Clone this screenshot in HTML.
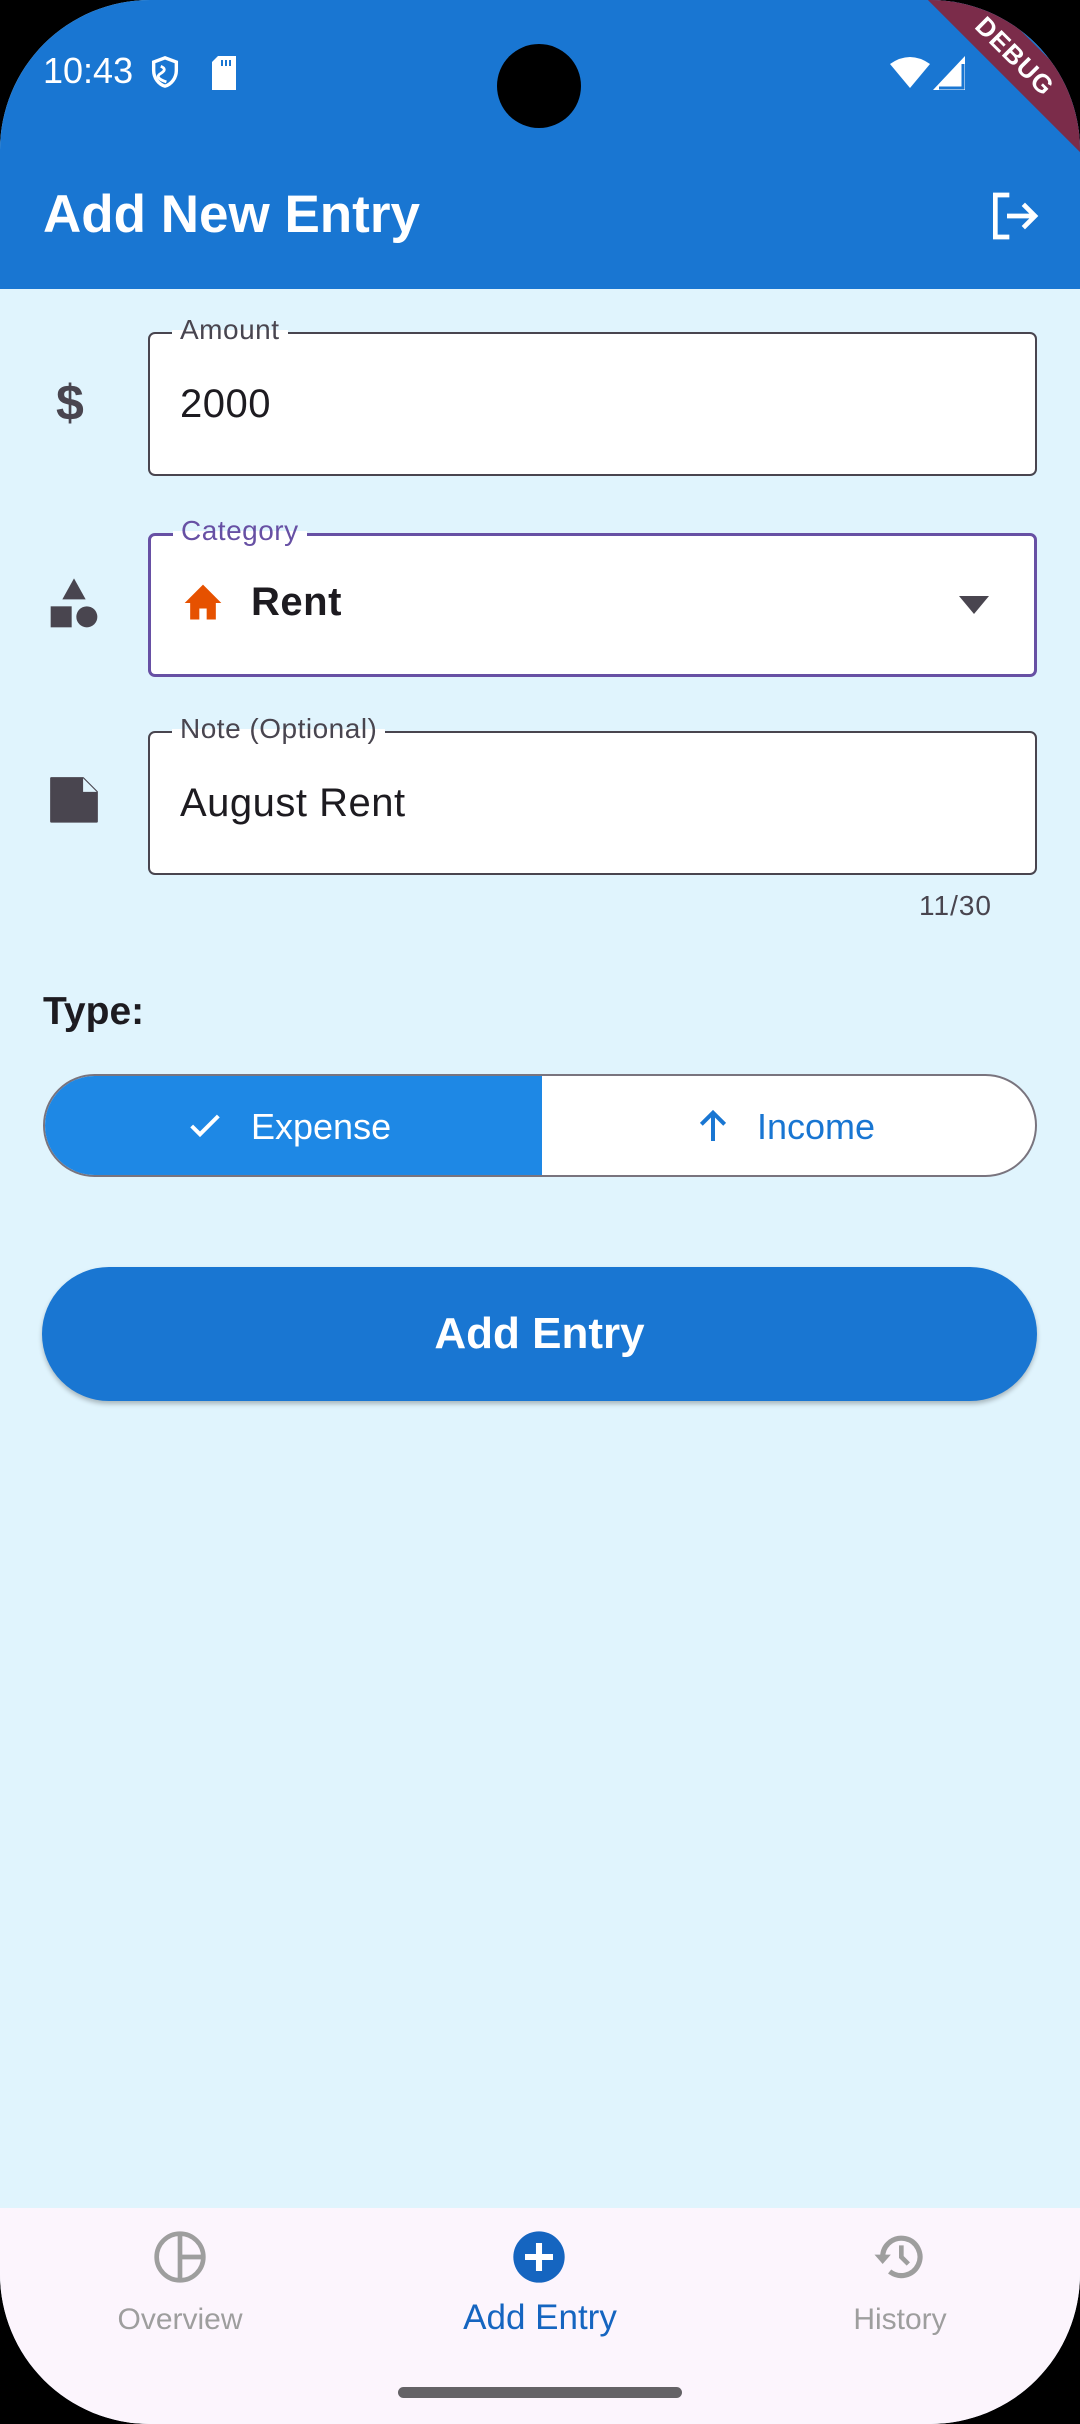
<!DOCTYPE html>
<html><head><meta charset="utf-8"><style>
*{margin:0;padding:0;box-sizing:border-box}
html,body{width:1080px;height:2424px;background:#000;overflow:hidden;font-family:"Liberation Sans",sans-serif}
#s{position:absolute;left:0;top:0;width:1080px;height:2424px;background:#E0F4FD;border-radius:150px;overflow:hidden}
.a{position:absolute}
.bar{left:0;top:0;width:1080px;height:289px;background:#1976D2}
.f{position:absolute;left:148px;width:889px;height:144px;background:#fff;border:2.5px solid #49454F;border-radius:7px}
.lbl{position:absolute;left:22px;top:-20px;background:linear-gradient(#E0F4FD 50%,#fff 50%);padding:0 8px;font-size:28px;color:#49454F;letter-spacing:.5px}
.val{position:absolute;left:30px;top:48px;font-size:40px;color:#1D1B20;letter-spacing:.5px}
</style></head><body><div id="s">
<div class="a bar"></div>
<div class="a" style="left:43px;top:50px;font-size:36px;color:#fff">10:43</div>
<svg class="a" style="left:148px;top:54px" width="34" height="36" viewBox="0 0 24 24"><path d="M12 2L4 5v6c0 5 3.4 9.7 8 11 4.6-1.3 8-6 8-11V5z" fill="none" stroke="#fff" stroke-width="2.4"/><path d="M9 8q5 2 0 5t4 6" stroke="#fff" stroke-width="2" fill="none"/></svg>
<svg class="a" style="left:210px;top:56px" width="28" height="34" viewBox="0 0 14 17"><path d="M4 0h9v17H1V3z" fill="#fff"/><path d="M6 2v3M8 2v3M10 2v3" stroke="#1976D2"/></svg>
<div class="a" style="left:497px;top:44px;width:84px;height:84px;border-radius:50%;background:#000"></div>
<svg class="a" style="left:890px;top:56px" width="40" height="34" viewBox="0 0 20 17"><path d="M10 16L0 4Q10-3 20 4z" fill="#fff"/></svg>
<svg class="a" style="left:933px;top:56px" width="34" height="34" viewBox="0 0 17 17"><path d="M16 0V17H0z" fill="#fff"/><path d="M15 4V16H3" fill="none" stroke="#1976D2" stroke-width="1.5"/></svg>
<div class="a" style="left:865px;top:34px;width:300px;height:44px;background:#7B2C4A;transform:rotate(45deg);color:#fff;font-weight:bold;font-size:26px;text-align:center;line-height:44px;letter-spacing:1px">DEBUG</div>
<div class="a" style="left:43px;top:184px;font-size:53px;font-weight:bold;color:#fff">Add New Entry</div>
<svg class="a" style="left:986px;top:188px" width="56" height="56" viewBox="0 0 24 24"><path d="M10 3H4v18h6" fill="none" stroke="#fff" stroke-width="2"/><path d="M9 12h12M16 7l5 5-5 5" fill="none" stroke="#fff" stroke-width="2"/></svg>

<div class="a" style="left:56px;top:374px;font-size:50px;font-weight:bold;color:#49454F">$</div>
<div class="f" style="top:332px"><div class="lbl">Amount</div><div class="val">2000</div></div>

<svg class="a" style="left:46px;top:576px" width="56" height="56" viewBox="0 0 24 24"><path d="M12 1L7 10h10z" fill="#49454F"/><rect x="2" y="13" width="9" height="9" fill="#49454F"/><circle cx="17.5" cy="17.5" r="4.5" fill="#49454F"/></svg>
<div class="f" style="top:533px;border:3.5px solid #6750A4"><div class="lbl" style="color:#6750A4;top:-21px">Category</div>
<svg class="a" style="left:30px;top:45px" width="44" height="44" viewBox="0 0 24 24"><path d="M12 2L2 12h3v9h5v-6h4v6h5v-9h3z" fill="#E65100"/></svg>
<div class="val" style="left:100px;top:44px;font-weight:bold">Rent</div>
<svg class="a" style="left:808px;top:60px" width="30" height="18" viewBox="0 0 10 6"><path d="M0 0h10L5 6z" fill="#49454F"/></svg></div>

<svg class="a" style="left:46px;top:776px" width="56" height="50" viewBox="0 0 24 22"><path d="M2 1h14l6 6v13H2z" fill="#49454F" stroke="#49454F" stroke-linejoin="round"/><path d="M16 1v6h6" fill="#E0F4FD"/></svg>
<div class="f" style="top:731px"><div class="lbl">Note (Optional)</div><div class="val">August Rent</div></div>
<div class="a" style="left:919px;top:890px;font-size:28px;color:#49454F;letter-spacing:1px">11/30</div>

<div class="a" style="left:43px;top:990px;font-size:39px;font-weight:bold;color:#1D1B20">Type:</div>
<div class="a" style="left:43px;top:1074px;width:994px;height:103px;border:2px solid #79747E;border-radius:52px;overflow:hidden;background:#fff">
<div class="a" style="left:0;top:0;width:497px;height:100px;background:#1E88E5"></div>
<svg class="a" style="left:140px;top:30px" width="40" height="40" viewBox="0 0 24 24"><path d="M4 12l5 5L20 6" fill="none" stroke="#fff" stroke-width="2.4"/></svg>
<div class="a" style="left:206px;top:30px;font-size:36px;color:#fff">Expense</div>
<svg class="a" style="left:648px;top:30px" width="40" height="40" viewBox="0 0 24 24"><path d="M12 21V4M5 11l7-7 7 7" fill="none" stroke="#1976D2" stroke-width="2.4"/></svg>
<div class="a" style="left:712px;top:30px;font-size:36px;color:#1976D2">Income</div>
</div>

<div class="a" style="left:42px;top:1267px;width:995px;height:134px;border-radius:67px;background:#1976D2;box-shadow:0 3px 5px rgba(0,0,0,.25);color:#fff;font-size:44px;font-weight:bold;text-align:center;line-height:134px">Add Entry</div>

<div class="a" style="left:0;top:2208px;width:1080px;height:216px;background:#FCF5FD"></div>
<svg class="a" style="left:152px;top:2229px" width="56" height="56" viewBox="0 0 24 24"><circle cx="12" cy="12" r="10" fill="none" stroke="#9E9E9E" stroke-width="2"/><path d="M12 2v20M12 12h10" stroke="#9E9E9E" stroke-width="2"/></svg>
<div class="a" style="left:80px;top:2303px;width:200px;text-align:center;font-size:30px;color:#9E9E9E">Overview</div>
<svg class="a" style="left:511px;top:2229px" width="56" height="56" viewBox="0 0 24 24"><circle cx="12" cy="12" r="11" fill="#1565C0"/><path d="M12 6v12M6 12h12" stroke="#fff" stroke-width="2.6"/></svg>
<div class="a" style="left:420px;top:2298px;width:240px;text-align:center;font-size:35px;color:#1565C0">Add Entry</div>
<svg class="a" style="left:870px;top:2229px" width="58" height="56" viewBox="0 0 24 24"><path d="M5 12a8 8 0 1 1 3 6.2" fill="none" stroke="#9E9E9E" stroke-width="2.2"/><path d="M1.5 11h7L5 15z" fill="#9E9E9E"/><path d="M13 7v5l3 3" fill="none" stroke="#9E9E9E" stroke-width="2"/></svg>
<div class="a" style="left:800px;top:2303px;width:200px;text-align:center;font-size:30px;color:#9E9E9E">History</div>
<div class="a" style="left:398px;top:2387px;width:284px;height:11px;border-radius:6px;background:#646266"></div>
</div></body></html>
